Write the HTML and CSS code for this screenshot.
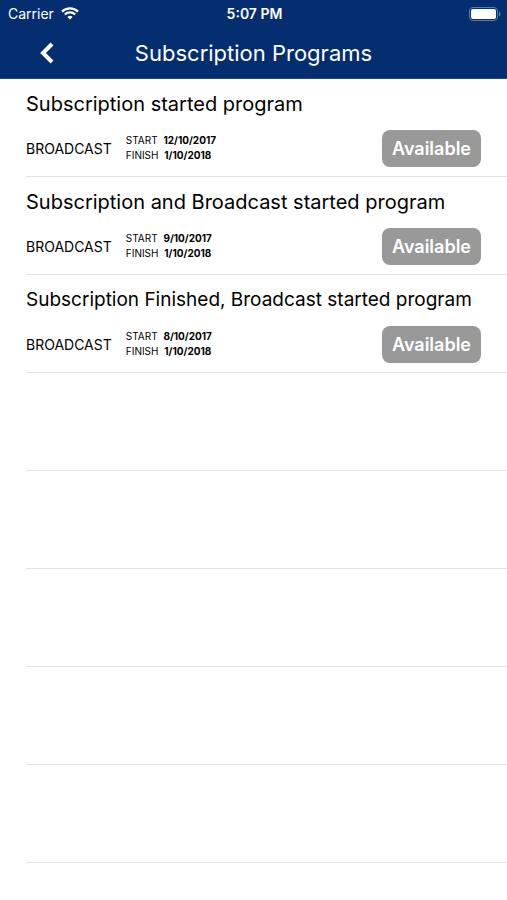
FILE: index.html
```html
<!DOCTYPE html>
<html lang="en">
<head>
  <meta charset="UTF-8" />
  <meta name="viewport" content="width=device-width, initial-scale=1" />
  <title>Subscription Programs</title>
  <link rel="stylesheet" href="styles.css">
</head>
<body>
  <header class="topbar">
    <div class="status">
      <div class="carrier">
        <span>Carrier</span>
        <svg class="wifi" viewBox="0 0 18 13" aria-hidden="true">
          <path d="M1 4.600a11.400 11.400 0 0 1 16 0M3.800 7.500a7.400 7.400 0 0 1 10.400 0" fill="none" stroke="#fff" stroke-width="2.200" />
          <path d="M9 12.600 6.400 10a3.700 3.700 0 0 1 5.200 0z" fill="#fff" />
        </svg>
      </div>
      <span class="clock">5:07 PM</span>
      <svg class="battery" viewBox="0 0 32 14" aria-hidden="true">
        <rect x="0.500" y="0.500" width="28" height="13" rx="3.500" fill="none" stroke="#5f7aa6" />
        <rect x="2" y="2" width="25" height="10" rx="2" fill="#fff" />
        <path d="M30 4.500c2 .8 2 4.200 0 5z" fill="#5f7aa6" />
      </svg>
    </div>
    <div class="nav">
      <button class="back" type="button" aria-label="Back">
        <svg viewBox="0 0 14 22" aria-hidden="true">
          <path d="M12 2 3 11l9 9" fill="none" stroke="#fff" stroke-width="4" />
        </svg>
      </button>
      <h1>Subscription Programs</h1>
    </div>
  </header>

  <ul class="programs">
    <li class="program">
      <h2>Subscription started program</h2>
      <div class="details">
        <span class="type">BROADCAST</span>
        <div class="dates">
          <p>START <b>12/10/2017</b></p>
          <p>FINISH <b>1/10/2018</b></p>
        </div>
        <button class="btn" type="button">Available</button>
      </div>
    </li>
    <li class="program">
      <h2>Subscription and Broadcast started program</h2>
      <div class="details">
        <span class="type">BROADCAST</span>
        <div class="dates">
          <p>START <b>9/10/2017</b></p>
          <p>FINISH <b>1/10/2018</b></p>
        </div>
        <button class="btn" type="button">Available</button>
      </div>
    </li>
    <li class="program">
      <h2 class="long">Subscription Finished, Broadcast started program</h2>
      <div class="details">
        <span class="type">BROADCAST</span>
        <div class="dates">
          <p>START <b>8/10/2017</b></p>
          <p>FINISH <b>1/10/2018</b></p>
        </div>
        <button class="btn" type="button">Available</button>
      </div>
    </li>
    <li class="program"></li>
    <li class="program"></li>
    <li class="program"></li>
    <li class="program"></li>
    <li class="program"></li>
  </ul>
</body>
</html>
```
FILE: styles.css
```css
:root {
  --primary: #042e6f;
  --button: #999;
  --line: #e2e2e4;
}

* {
  box-sizing: border-box;
}

body {
  margin: 0;
  font-family: Inter, "Liberation Sans", sans-serif;
  background: #fff;
  color: #000;
}

h1, h2, p {
  margin: 0;
  font-weight: 400;
}

/* ----- Top bar ----- */
.topbar {
  background: var(--primary);
  color: #fff;
  border-bottom: 1px solid #274b85;
}

.status {
  display: grid;
  grid-template-columns: 1fr auto 1fr;
  align-items: center;
  height: 27px;
  padding: 0 6px 0 8px;
  font-size: 14px;
}

.carrier {
  display: flex;
  align-items: center;
  gap: 7px;
}

.wifi {
  width: 18px;
  height: 13px;
}

.clock {
  font-weight: 600;
}

.battery {
  width: 32px;
  height: 14px;
  justify-self: end;
}

.nav {
  display: grid;
  grid-template-columns: 80px 1fr 80px;
  align-items: center;
  height: 51px;
}

.back {
  display: flex;
  justify-content: flex-end;
  padding: 0 26px 0 0;
  border: none;
  background: none;
  cursor: pointer;
}

.back svg {
  width: 14px;
  height: 22px;
}

.nav h1 {
  font-size: 22px;
  text-align: center;
  white-space: nowrap;
}

/* ----- Program list ----- */
.programs {
  margin: 0;
  padding: 0 0 0 26px;
  list-style: none;
}

.program {
  min-height: 98px;
  padding: 12px 26px 0 0;
  border-bottom: 1px solid var(--line);
}

.program h2 {
  font-size: 20px;
  line-height: 26px;
}

/* long titles shrink a little to stay on one line */
.program .long {
  font-size: 19px;
}

.details {
  display: flex;
  align-items: center;
  gap: 14px;
  height: 38px;
  margin-top: 12px;
}

.type {
  font-size: 14px;
}

.dates {
  font-size: 10px;
  line-height: 15px;
}

.dates b {
  margin-left: 3px;
}

.btn {
  height: 37px;
  margin-left: auto;
  padding: 0 10px;
  border: none;
  border-radius: 8px;
  background: var(--button);
  color: #fff;
  font-family: inherit;
  font-size: 18px;
  font-weight: 600;
  cursor: pointer;
}
```
